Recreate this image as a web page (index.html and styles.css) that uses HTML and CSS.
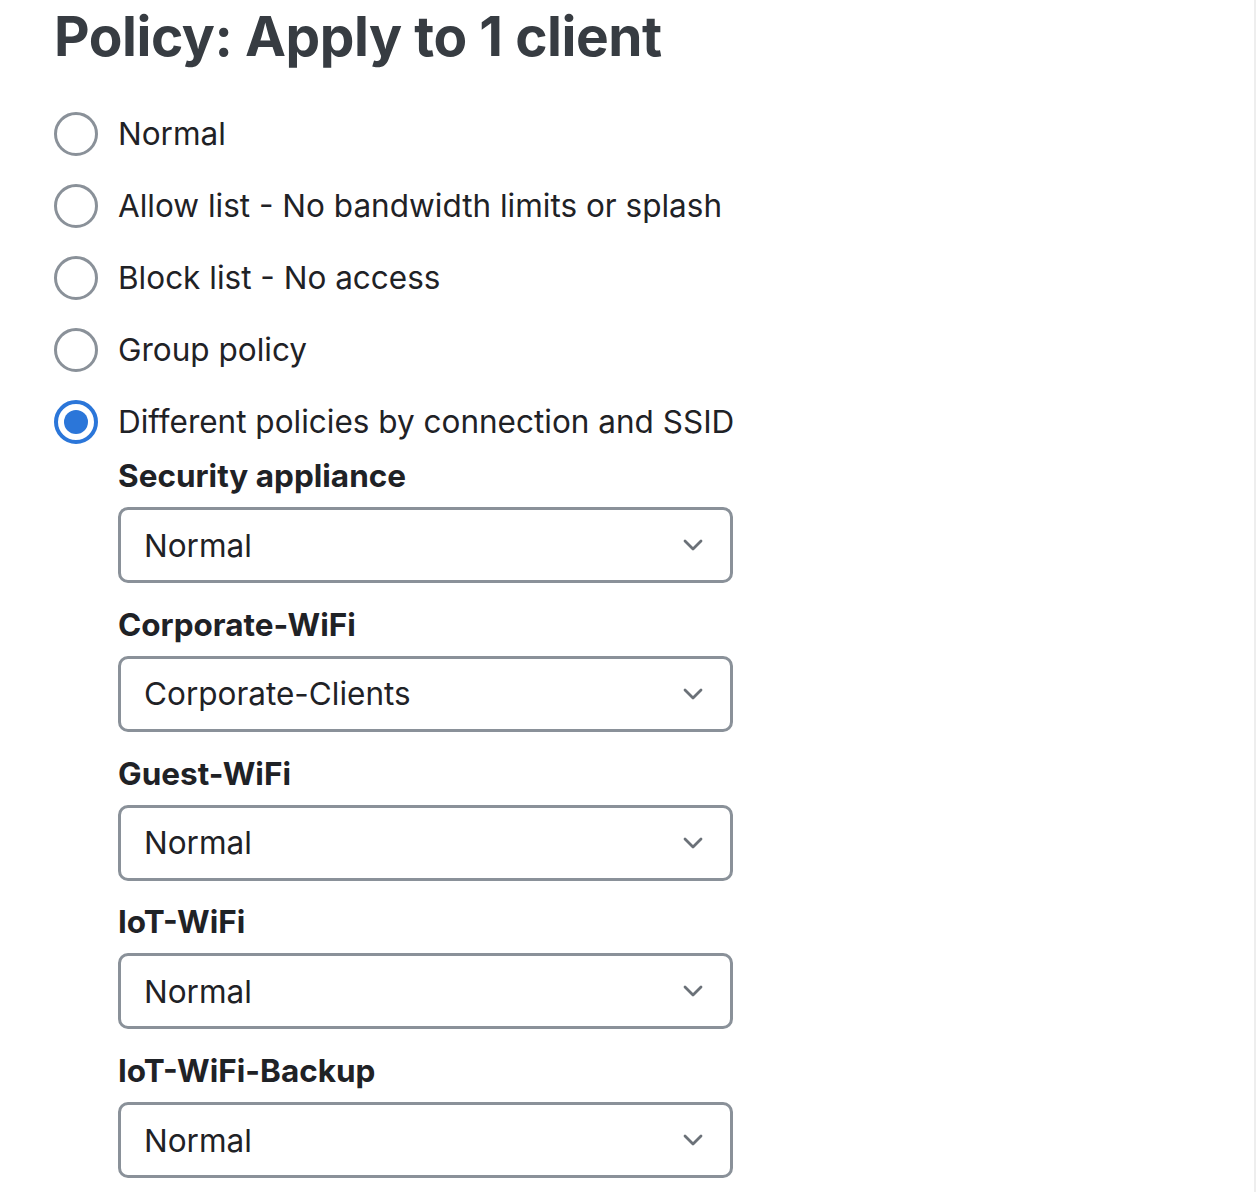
FILE: index.html
```html
<!DOCTYPE html>
<html lang="en">
<head>
<meta charset="utf-8">
<title>Policy</title>
<link rel="stylesheet" href="styles.css">
</head>
<body>
<div class="page">
  <h1 class="title">Policy: Apply to 1 client</h1>
  <div class="options">
    <label class="option"><span class="radio"></span><span class="opt-text">Normal</span></label>
    <label class="option"><span class="radio"></span><span class="opt-text">Allow list - No bandwidth limits or splash</span></label>
    <label class="option"><span class="radio"></span><span class="opt-text">Block list - No access</span></label>
    <label class="option"><span class="radio"></span><span class="opt-text">Group policy</span></label>
    <label class="option"><span class="radio checked"></span><span class="opt-text">Different policies by connection and SSID</span></label>
  </div>
  <div class="groups">
    <div class="group">
      <div class="group-label">Security appliance</div>
      <div class="select"><span>Normal</span><svg class="chev" viewBox="0 0 20 12" width="20" height="12"><path d="M2 2 L10 10 L18 2" fill="none" stroke="#6b7178" stroke-width="2.8" stroke-linecap="round" stroke-linejoin="round"/></svg></div>
    </div>
    <div class="group">
      <div class="group-label">Corporate-WiFi</div>
      <div class="select"><span>Corporate-Clients</span><svg class="chev" viewBox="0 0 20 12" width="20" height="12"><path d="M2 2 L10 10 L18 2" fill="none" stroke="#6b7178" stroke-width="2.8" stroke-linecap="round" stroke-linejoin="round"/></svg></div>
    </div>
    <div class="group">
      <div class="group-label">Guest-WiFi</div>
      <div class="select"><span>Normal</span><svg class="chev" viewBox="0 0 20 12" width="20" height="12"><path d="M2 2 L10 10 L18 2" fill="none" stroke="#6b7178" stroke-width="2.8" stroke-linecap="round" stroke-linejoin="round"/></svg></div>
    </div>
    <div class="group">
      <div class="group-label">IoT-WiFi</div>
      <div class="select"><span>Normal</span><svg class="chev" viewBox="0 0 20 12" width="20" height="12"><path d="M2 2 L10 10 L18 2" fill="none" stroke="#6b7178" stroke-width="2.8" stroke-linecap="round" stroke-linejoin="round"/></svg></div>
    </div>
    <div class="group">
      <div class="group-label">IoT-WiFi-Backup</div>
      <div class="select"><span>Normal</span><svg class="chev" viewBox="0 0 20 12" width="20" height="12"><path d="M2 2 L10 10 L18 2" fill="none" stroke="#6b7178" stroke-width="2.8" stroke-linecap="round" stroke-linejoin="round"/></svg></div>
    </div>
  </div>
</div>
</body>
</html>
```
FILE: styles.css
```css
html, body {
  margin: 0;
  padding: 0;
  background: #ffffff;
}
body {
  font-family: Inter, "Noto Sans", sans-serif;
  color: #1f2226;
}
.page {
  box-sizing: border-box;
  width: 1256px;
  min-height: 1192px;
  padding-left: 54px;
  border-right: 2px solid #eeeeee;
}
.title {
  margin: 0;
  height: 98px;
  font-size: 55px;
  font-weight: 700;
  line-height: 72px;
  letter-spacing: -0.45px;
  color: #373c42;
}
.options {
  display: flex;
  flex-direction: column;
}
.option {
  display: flex;
  align-items: center;
  gap: 20px;
  height: 72px;
}
.radio {
  box-sizing: border-box;
  width: 44px;
  height: 44px;
  border: 3px solid #8a9199;
  border-radius: 50%;
  flex: none;
  display: flex;
  align-items: center;
  justify-content: center;
}
.radio.checked {
  border: 4px solid #2b76d9;
}
.radio.checked::after {
  content: "";
  width: 24px;
  height: 24px;
  border-radius: 50%;
  background: #2b76d9;
}
.opt-text {
  font-size: 31.5px;
  line-height: 40px;
  color: #1f2226;
}
.groups {
  padding-left: 64px;
  display: flex;
  flex-direction: column;
}
.group {
  display: flex;
  flex-direction: column;
  gap: 13px;
  margin-bottom: 23.75px;
}
.group-label {
  font-size: 31.5px;
  font-weight: 700;
  line-height: 36px;
  color: #1f2226;
}
.select {
  box-sizing: border-box;
  width: 615px;
  height: 76px;
  border: 3px solid #8a9199;
  border-radius: 10px;
  display: flex;
  align-items: center;
  justify-content: space-between;
  padding: 0 27px 0 23px;
  font-size: 31.5px;
  color: #1f2226;
}
.chev {
  flex: none;
}
```
